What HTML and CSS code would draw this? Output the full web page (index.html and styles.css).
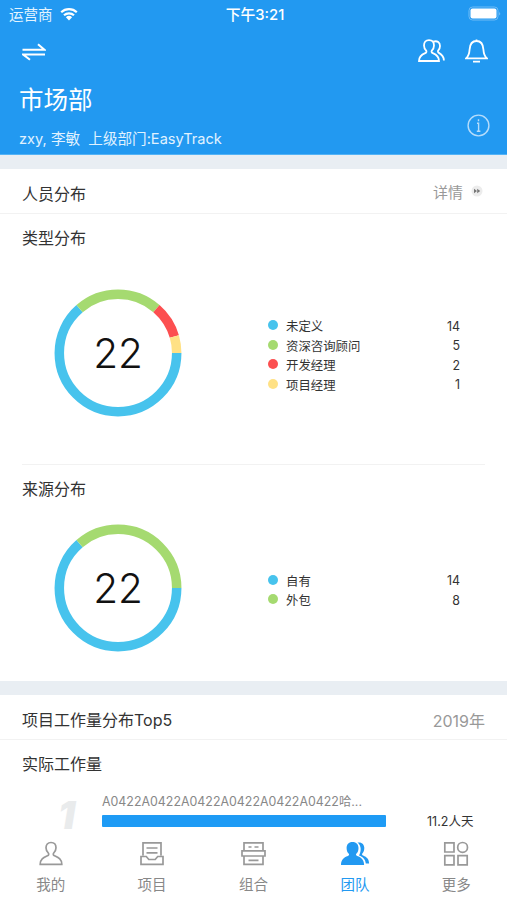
FILE: index.html
```html
<!DOCTYPE html>
<html lang="zh-CN">
<head>
    <meta charset="UTF-8">
    <meta name="viewport" content="width=device-width, initial-scale=1.0">
    <title>市场部</title>
    <link rel="stylesheet" href="styles.css">
</head>
<body>
    <div class="app">
        <header class="header">
            <div class="status-bar">
                <div class="carrier">
                    <span>运营商</span>
                    <svg width="18" height="14" viewBox="0 0 18 14">
                        <path d="M1.2 5.2a11.2 11.2 0 0 1 15.6 0M4 8.3a7.2 7.2 0 0 1 10 0" fill="none" stroke="#fff" stroke-width="2.2"/>
                        <path d="M5.9 10.2a4.5 4.5 0 0 1 6.2 0L9 13.4z" fill="#fff"/>
                    </svg>
                </div>
                <span class="time">下午3:21</span>
                <svg class="battery" width="33" height="15" viewBox="0 0 33 15">
                    <rect x="1" y="1" width="29" height="13" rx="3.5" fill="none" stroke="#6fbcf6"/>
                    <rect x="2.5" y="2.5" width="26" height="10" rx="2" fill="#fff"/>
                    <path d="M31.3 5.5q1.6 2 0 4z" fill="#8fcaf8"/>
                </svg>
            </div>
            <div class="toolbar">
                <svg width="24" height="18" viewBox="0 0 24 18">
                    <path d="M.5 6.8h22L16 1.2M23 11.6H1.200l6.800 5.200" fill="none" stroke="#fff" stroke-width="2"/>
                </svg>
                <div class="actions">
                    <svg width="27" height="24" viewBox="0 0 27 24">
                        <path d="M11 1.2c3.300 0 5 2.200 5 5.200 0 2.200-.8 3.800-2.200 5.200-.7 1 0 2.200 1 2.600 3.600 1.500 6.200 3.300 6.200 7.800H1c0-4.500 2.600-6.300 6.200-7.800 1-.4 1.700-1.600 1-2.600C6.800 10.200 6 8.600 6 6.400c0-3 1.700-5.200 5-5.200z"/>
                        <path d="M15.300 2.700c4.200-1.400 6.700 1 6.700 4.200 0 2-.7 3.300-1.700 4.400-.8 1-.3 2.100.6 2.600 3 1.700 5 3.400 5 7.600"/>
                    </svg>
                    <svg width="23" height="25" viewBox="0 0 23 25">
                        <path d="M11.500.5v1.500M1.200 19.300h20.600c-2.300-2-3.100-4.500-3.400-8.800-.3-5.200-2.700-8.500-6.900-8.500S4.900 5.300 4.600 10.500c-.3 4.300-1.100 6.800-3.400 8.800zM8 22.700h7"/>
                    </svg>
                </div>
            </div>
            <div class="department">
                <div>
                    <h1>市场部</h1>
                    <p>zxy, 李敏&nbsp; 上级部门:EasyTrack</p>
                </div>
                <svg class="info" width="23" height="23" viewBox="0 0 23 23">
                    <circle cx="11.5" cy="11.5" r="10.400"/>
                    <path d="M10 9.300h1.600v7.800M9.800 17.300h3.600M11.500 5.200v2"/>
                </svg>
            </div>
        </header>

        <section class="card staff">
            <div class="card-title">
                <h2>人员分布</h2>
                <a class="detail">详情
                    <svg width="12" height="12" viewBox="0 0 12 12">
                        <circle cx="6" cy="6" r="5.5" fill="#ececec"/>
                        <path d="M3 3.800 6 6 3 8.200zM6.200 3.800 9.200 6l-3 2.200z" fill="#777"/>
                    </svg>
                </a>
            </div>
            <div class="chart-block">
                <h3>类型分布</h3>
                <div class="chart-row">
                    <svg class="donut" width="128" height="128" viewBox="0 0 128 128">
                        <g fill="none" stroke-width="9.5">
                            <circle class="blue" cx="64" cy="64" r="58.7" pathLength="22" stroke-dasharray="14 22"/>
                            <circle class="green" cx="64" cy="64" r="58.7" pathLength="22" stroke-dasharray="5 22" stroke-dashoffset="-14"/>
                            <circle class="red" cx="64" cy="64" r="58.7" pathLength="22" stroke-dasharray="2 22" stroke-dashoffset="-19"/>
                            <circle class="yellow" cx="64" cy="64" r="58.7" pathLength="22" stroke-dasharray="1 22" stroke-dashoffset="-21"/>
                        </g>
                        <text x="64" y="79" text-anchor="middle">22</text>
                    </svg>
                    <ul class="legend">
                        <li><i class="dot blue"></i><span>未定义</span><b>14</b></li>
                        <li><i class="dot green"></i><span>资深咨询顾问</span><b>5</b></li>
                        <li><i class="dot red"></i><span>开发经理</span><b>2</b></li>
                        <li><i class="dot yellow"></i><span>项目经理</span><b>1</b></li>
                    </ul>
                </div>
            </div>
            <div class="chart-block source">
                <h3>来源分布</h3>
                <div class="chart-row">
                    <svg class="donut" width="128" height="128" viewBox="0 0 128 128">
                        <g fill="none" stroke-width="9.5">
                            <circle class="blue" cx="64" cy="64" r="58.7" pathLength="22" stroke-dasharray="14 22"/>
                            <circle class="green" cx="64" cy="64" r="58.7" pathLength="22" stroke-dasharray="8 22" stroke-dashoffset="-14"/>
                        </g>
                        <text x="64" y="79" text-anchor="middle">22</text>
                    </svg>
                    <ul class="legend">
                        <li><i class="dot blue"></i><span>自有</span><b>14</b></li>
                        <li><i class="dot green"></i><span>外包</span><b>8</b></li>
                    </ul>
                </div>
            </div>
        </section>

        <section class="card workload">
            <div class="card-title">
                <h2>项目工作量分布Top5</h2>
                <span class="year">2019年</span>
            </div>
            <h3>实际工作量</h3>
            <div class="rank-row">
                <span class="rank">1</span>
                <div class="project">
                    <p>A0422A0422A0422A0422A0422A0422哈...</p>
                    <div class="bar"></div>
                </div>
                <span class="days">11.2人天</span>
            </div>
        </section>

        <nav class="tabs">
            <a>
                <svg width="28" height="26" viewBox="0 0 28 26">
                    <path d="M14 1.500c3.300 0 5 2.300 5 5.200 0 2.400-1 4-2.300 5.300-.9 1.200-.3 2.300.8 2.800 3.700 1.700 7.300 3 7.300 8.500H3.200c0-5.500 3.600-6.800 7.300-8.500 1.100-.5 1.700-1.600.8-2.800C10 10.700 9 9.100 9 6.700c0-2.900 1.700-5.200 5-5.200z"/>
                </svg>
                <span>我的</span>
            </a>
            <a>
                <svg width="28" height="26" viewBox="0 0 28 26">
                    <path d="M5 14.500V1.800h18v12.700M8.500 7h11M8.500 11.800h11M3 15.500h5.300l2.500 3h6.400l2.500-3H25v7.800H3z"/>
                </svg>
                <span>项目</span>
            </a>
            <a>
                <svg width="28" height="26" viewBox="0 0 28 26">
                    <path d="M5 9.800V1.800h19v8M5 15v8.300h19V15M3 9.800h23V15H3zM9.500 19.300h10M9.500 6h3M15.500 6h4"/>
                </svg>
                <span>组合</span>
            </a>
            <a class="active">
                <svg width="30" height="26" viewBox="0 0 30 26">
                    <path d="M12.500 1c3.900 0 6 2.600 6 6 0 2.700-.8 4.500-2.200 5.800-.8 1 0 1.800.8 2.100 4.600 1.500 7 4 7 9.100H1c0-5.100 2.400-7.600 7-9.100.8-.3 1.600-1.100.8-2.100C7.400 11.500 6.600 9.700 6.600 7c0-3.400 2-6 5.900-6z"/>
                    <path d="M17.500 1.600c4.200-.9 6.800 1.800 6.800 5.400 0 2.400-.8 4.200-2 5.400-.6 1 0 1.700.8 2 4 1.600 5.900 3.800 6 8.200h-3.300c-.5-4.400-2.800-6.400-6.800-8 2.500-4.600 2.500-9.600-1.500-13z"/>
                </svg>
                <span>团队</span>
            </a>
            <a>
                <svg width="28" height="26" viewBox="0 0 28 26">
                    <path d="M2.800 1.800h9.200v9.200H2.800zM2.800 14.600h9.200v9.200H2.800zM16 14.600h9.200v9.200H16z"/>
                    <circle cx="20.600" cy="6.400" r="4.900"/>
                </svg>
                <span>更多</span>
            </a>
        </nav>
    </div>
</body>
</html>
```
FILE: styles.css
```css
* {
    margin: 0;
    padding: 0;
    box-sizing: border-box;
}

body {
    font-family: Inter, "Noto Sans CJK SC", sans-serif;
    color: #333;
    background: #e9eef3;
}

.app {
    height: 900px;
    display: flex;
    flex-direction: column;
    overflow: hidden;
}

svg {
    display: block;
    flex-shrink: 0;
}

h1, h2, h3 {
    font-weight: normal;
}

.header {
    height: 155px;
    background: #2299f1;
    border-bottom: 1px solid #53b3f6;
    color: #fff;
    flex-shrink: 0;
}

.status-bar {
    height: 27px;
    padding: 0 6px 0 9px;
    display: grid;
    grid-template-columns: 1fr auto 1fr;
    align-items: center;
    font-size: 14.5px;
}

.carrier {
    display: flex;
    align-items: center;
    gap: 7px;
    color: #e3f4ff;
}

.time {
    font-size: 14.8px;
    font-weight: 500;
}

.battery {
    justify-self: end;
}

.toolbar {
    height: 49px;
    padding: 0 19px 0 22px;
    display: flex;
    align-items: center;
    justify-content: space-between;
}

.actions {
    display: flex;
    gap: 20px;
    fill: none;
    stroke: #fff;
    stroke-width: 1.8;
}

.department {
    display: flex;
    justify-content: space-between;
    padding: 6px 17px 0 19px;
}

.department h1 {
    font-size: 24.5px;
    line-height: 36px;
}

.department p {
    margin-top: 10px;
    font-size: 14.6px;
    line-height: 22px;
    color: #e0f2ff;
}

.info {
    margin-top: 32px;
    fill: none;
    stroke: #b5dcfb;
    stroke-width: 1.4;
}

.card {
    background: #fff;
    flex-shrink: 0;
}

.staff {
    margin-top: 14px;
    height: 512px;
}

.card-title {
    height: 45px;
    padding: 5px 22px 0;
    border-bottom: 1px solid #f2f2f2;
    display: flex;
    align-items: center;
    justify-content: space-between;
}

h2, h3 {
    font-size: 16px;
    line-height: 24px;
}

.card-title h2 {
    padding-top: 1px;
}

.detail {
    display: flex;
    align-items: center;
    gap: 8px;
    padding-right: 2px;
    margin-top: -5px;
    font-size: 15px;
    color: #999;
}

.chart-block {
    height: 250px;
    margin: 0 22px;
    padding-top: 12px;
}

.source {
    height: 217px;
    border-top: 1px solid #f2f2f2;
}

.chart-row {
    display: flex;
    align-items: center;
    margin: 39px 25px 0 32px;
}

.source .chart-row {
    margin-top: 23px;
}

.donut text {
    font-size: 40.5px;
    font-weight: 300;
    fill: #111;
}

.legend {
    flex: 1;
    margin-left: 86px;
    padding-top: 5px;
    list-style: none;
    font-size: 12.4px;
}

.legend li {
    height: 19.6px;
    display: flex;
    align-items: center;
}

.legend b {
    margin-left: auto;
    font-weight: 400;
}

.dot {
    width: 10px;
    height: 10px;
    margin: -2px 8px 0 0;
    border-radius: 50%;
    background: currentColor;
}

.blue {
    color: #47c3ed;
    stroke: #47c3ed;
}

.green {
    color: #a5da70;
    stroke: #a5da70;
}

.red {
    color: #fc4f50;
    stroke: #fc4f50;
}

.yellow {
    color: #ffe185;
    stroke: #ffe185;
}

.workload {
    margin-top: 14px;
    height: 137px;
}

.workload h3 {
    margin: 12px 22px 0;
}

.year {
    font-size: 16px;
    color: #999;
}

.rank-row {
    display: flex;
    margin-top: 16px;
    padding-left: 58px;
}

.rank {
    width: 44px;
    padding-top: 5px;
    font-size: 38px;
    line-height: 37px;
    font-style: italic;
    font-weight: 900;
    color: #e9ebec;
}

.project {
    width: 284px;
    white-space: nowrap;
}

.project p {
    font-size: 12.4px;
    line-height: 20px;
    color: #888;
}

.bar {
    height: 12px;
    margin-top: 3px;
    border-radius: 1px;
    background: #1e9bf5;
}

.days {
    margin-left: 41px;
    padding-top: 20px;
    font-size: 12.5px;
    line-height: 20px;
}

.tabs {
    flex: 1;
    display: grid;
    grid-template-columns: repeat(5, 1fr);
    background: #fff;
    padding-top: 9px;
}

.tabs a {
    display: flex;
    flex-direction: column;
    align-items: center;
    gap: 8px;
    font-size: 14.5px;
    line-height: 20px;
    color: #888;
}

.tabs svg {
    fill: none;
    stroke: #999;
    stroke-width: 1.7;
}

.tabs .active {
    color: #2299f1;
}

.tabs .active svg {
    fill: #2299f1;
    stroke: none;
}
```
